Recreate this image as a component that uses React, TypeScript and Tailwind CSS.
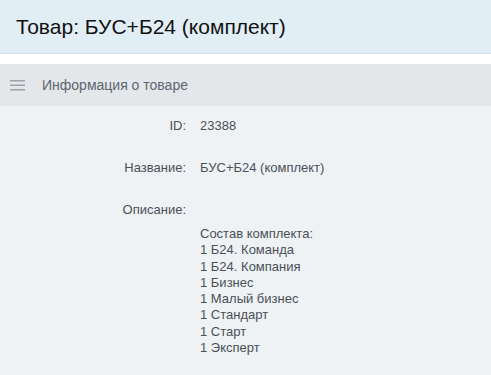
export default function App() {
  const items = [
    'Состав комплекта:',
    '1 Б24. Команда',
    '1 Б24. Компания',
    '1 Бизнес',
    '1 Малый бизнес',
    '1 Стандарт',
    '1 Старт',
    '1 Эксперт',
  ]

  return (
    <div className="min-h-[375px] bg-white font-['Liberation_Sans',Arial,sans-serif]">
      <div className="h-[54px] bg-[#e2eef5] border-b border-[#d5e1e8] flex items-center px-4">
        <h1 className="text-[21px] text-[#111] leading-none">Товар: БУС+Б24 (комплект)</h1>
      </div>
      <div className="pt-[10px]">
        <div className="h-[42px] bg-[#e3e7ea] flex items-center pl-[10px]">
          <svg width="15" height="11" viewBox="0 0 15 11" className="mr-[17px]">
            <rect x="0" y="0" width="15" height="1.5" fill="#9aa1a8" />
            <rect x="0" y="4.5" width="15" height="1.5" fill="#9aa1a8" />
            <rect x="0" y="9" width="15" height="1.5" fill="#9aa1a8" />
          </svg>
          <span className="text-[14px] text-[#5d6671]">Информация о товаре</span>
        </div>
        <div className="bg-[#eef2f4] pt-[12px] pb-[30px] text-[13px] leading-[16px] text-[#4a5058]">
          <div className="flex">
            <div className="w-[186px] text-right">ID:</div>
            <div className="pl-[14px]">23388</div>
          </div>
          <div className="flex mt-[26px]">
            <div className="w-[186px] text-right">Название:</div>
            <div className="pl-[14px]">БУС+Б24 (комплект)</div>
          </div>
          <div className="flex mt-[26px]">
            <div className="w-[186px] text-right">Описание:</div>
            <div className="pl-[14px]">
              <div className="h-[16px]" />
              <div className="mt-[8px] leading-[16.3px]">
                {items.map((t, i) => (
                  <div key={i}>{t}</div>
                ))}
              </div>
            </div>
          </div>
        </div>
      </div>
    </div>
  )
}
